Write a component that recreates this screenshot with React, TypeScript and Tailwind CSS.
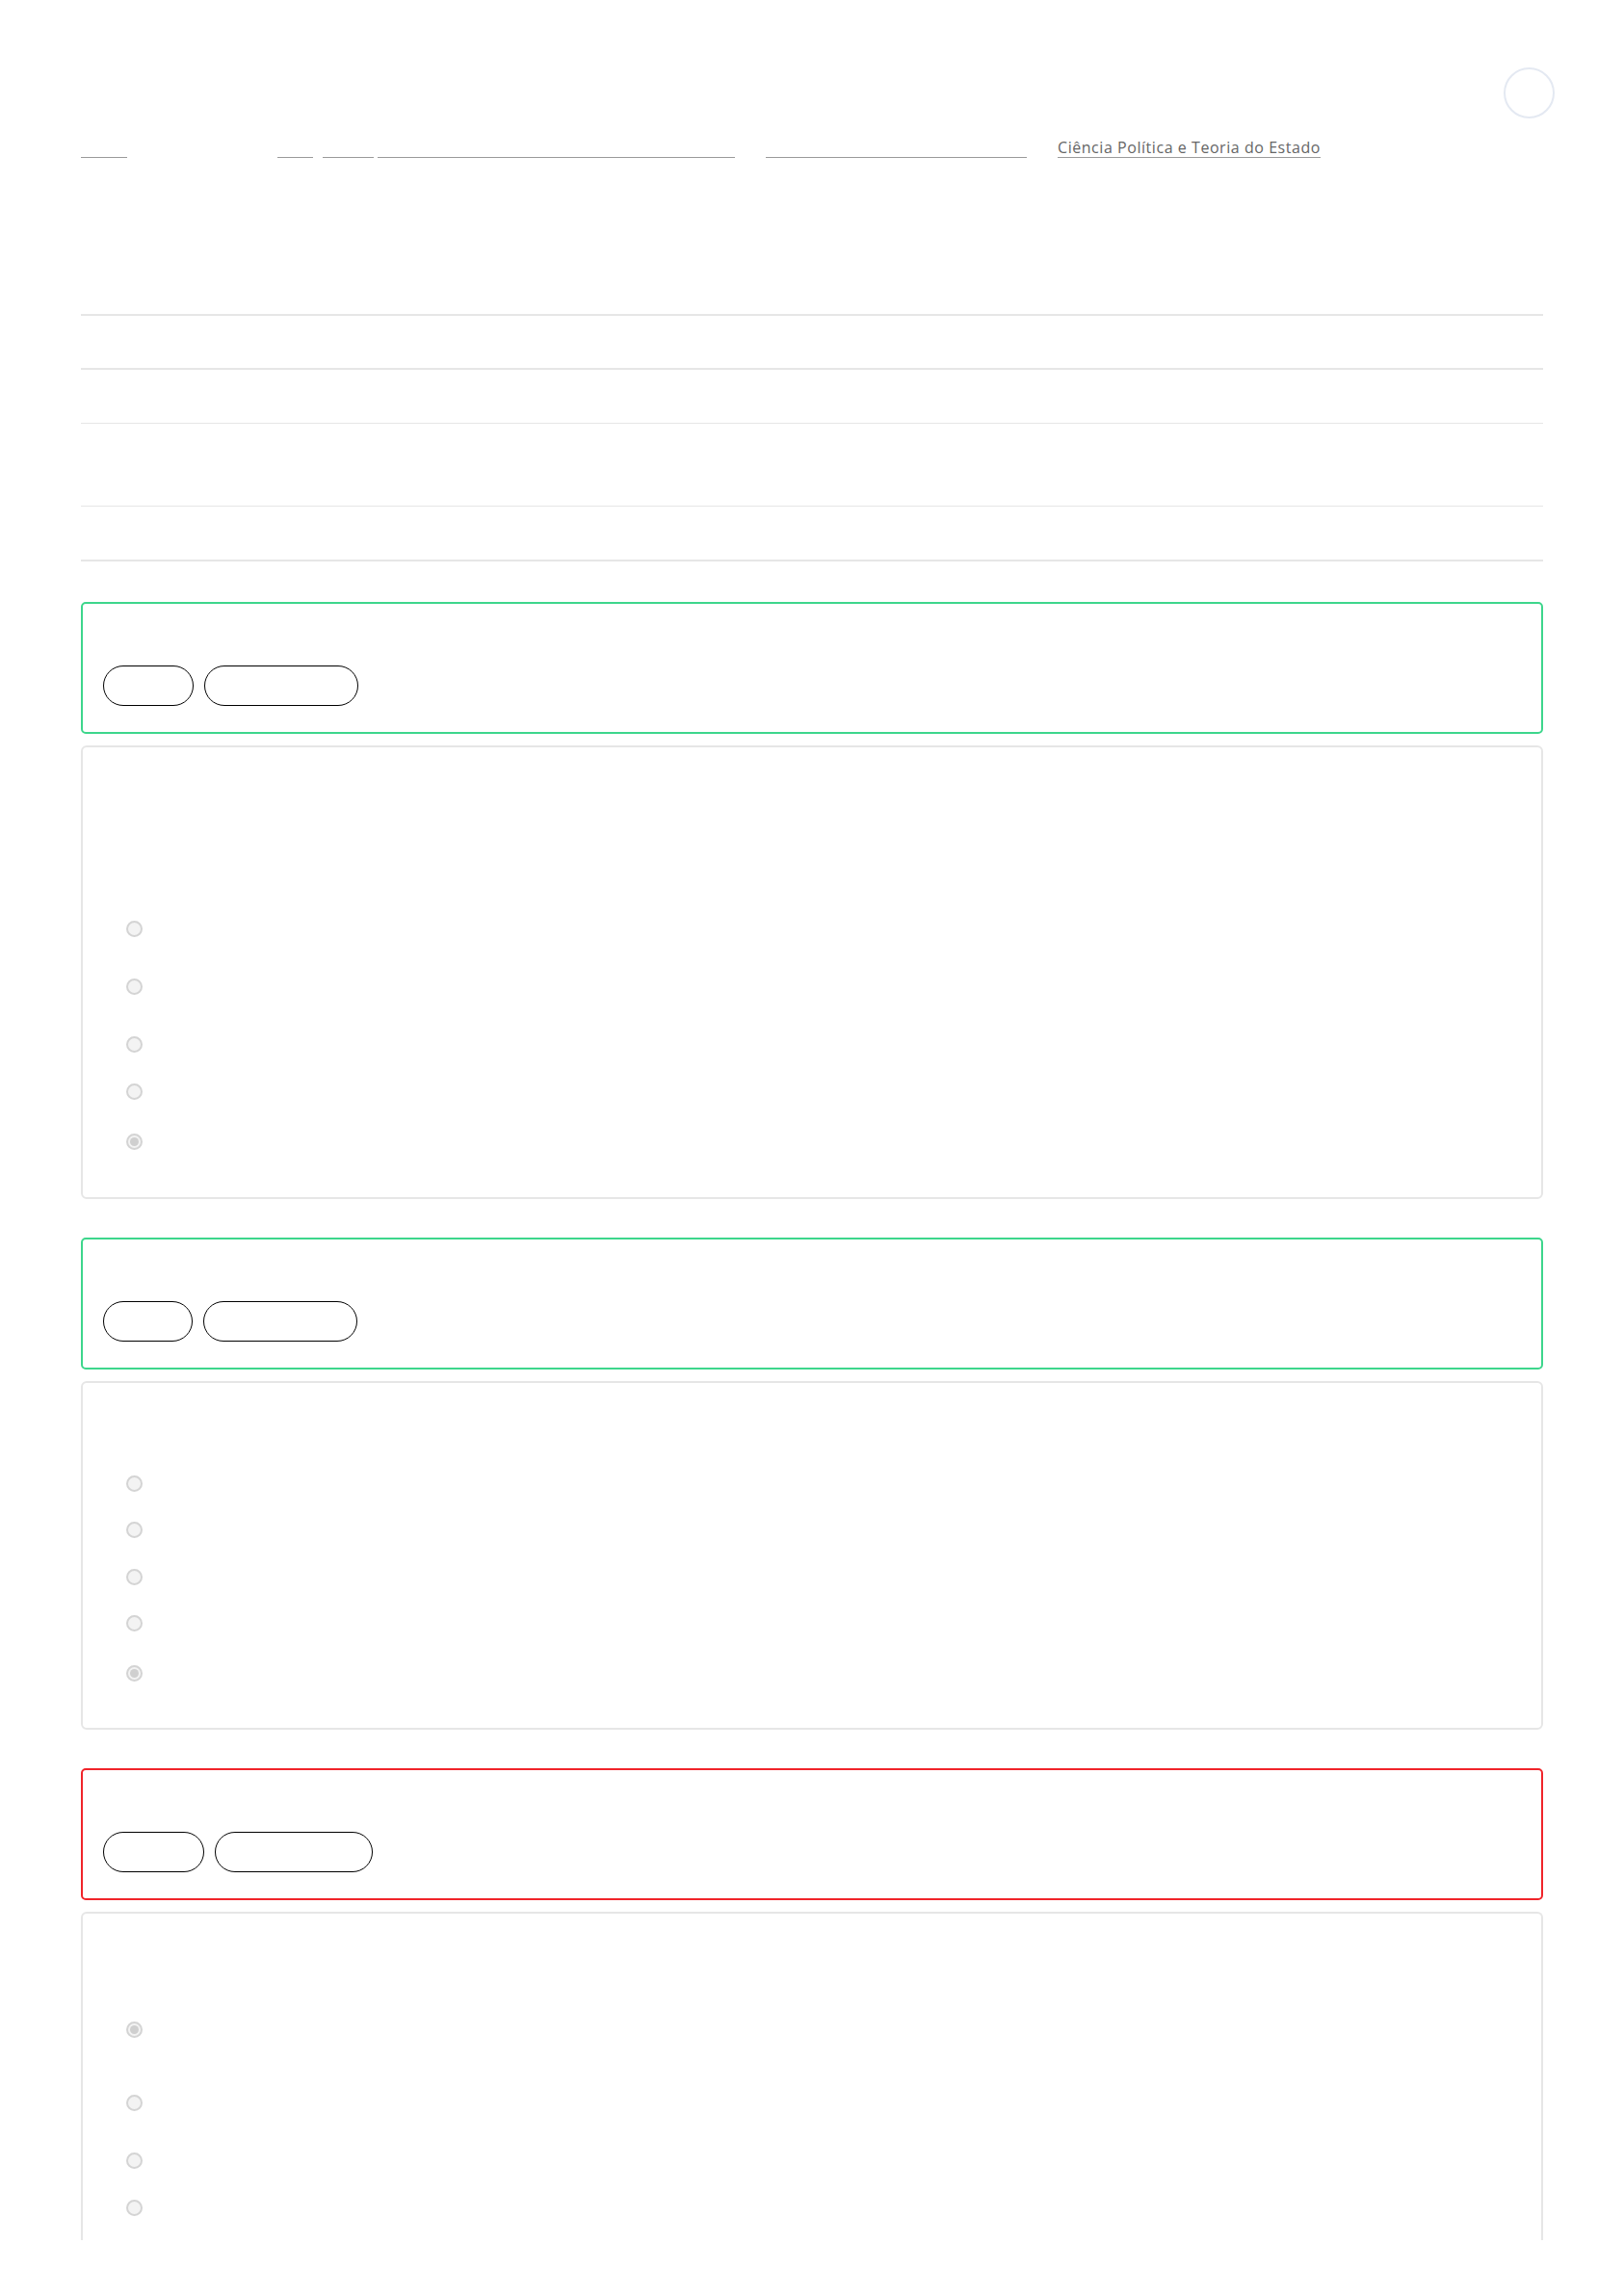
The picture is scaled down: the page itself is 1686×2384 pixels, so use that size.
import React from "react";

function Radio({ checked = false, className = "" }: { checked?: boolean; className?: string }) {
  return (
    <div className={"flex items-center " + className}>
      <span className="flex h-[17px] w-[17px] items-center justify-center rounded-full border-2 border-[#d4d4d4] bg-[#f3f3f3]">
        {checked && <span className="h-[9px] w-[9px] rounded-full bg-[#cfcfcf]" />}
      </span>
    </div>
  );
}

function Pill({ w }: { w: string }) {
  return <div className={"h-[42px] rounded-full border border-black bg-white " + w} />;
}

function ResultBox({ color, pills }: { color: string; pills: string[] }) {
  return (
    <div className={"h-[137px] rounded-[5px] border-2 bg-white px-[21px] pt-[64px] " + color}>
      <div className="flex gap-[11px]">
        {pills.map((p, i) => (
          <Pill key={i} w={p} />
        ))}
      </div>
    </div>
  );
}

export default function App() {
  return (
    <div
      className="min-h-[2384px] bg-white pb-[58px]"
      style={{ fontFamily: '"Open Sans", "Noto Sans", sans-serif' }}
    >
      <div className="mx-auto w-[1518px]">
        {/* top bar */}
        <div className="flex justify-end pt-[70px] -mr-[12px]">
          <div className="h-[53px] w-[53px] rounded-full border-2 border-[#e4e9f2] bg-white" />
        </div>

        {/* breadcrumb */}
        <div className="mt-[21px] flex h-[20px] items-end">
          <div className="h-px w-[48px] bg-[#9a9a9a]" />
          <div className="ml-[156px] h-px w-[37px] bg-[#9a9a9a]" />
          <div className="ml-[10px] h-px w-[53px] bg-[#9a9a9a]" />
          <div className="ml-[4px] h-px w-[371px] bg-[#9a9a9a]" />
          <div className="ml-[32px] h-px w-[271px] bg-[#9a9a9a]" />
          <a
            href="#"
            className="ml-[32px] border-b border-[#9a9a9a] text-[16px] font-medium leading-[19px] tracking-[0.55px] text-[#666666]"
          >
            Ciência Política e Teoria do Estado
          </a>
        </div>

        {/* info table lines */}
        <div className="mt-[162px]">
          <div className="h-[2px] bg-[#e6e6e6]" />
          <div className="h-[54px]" />
          <div className="h-[2px] bg-[#e6e6e6]" />
          <div className="h-[55px]" />
          <div className="h-px bg-[#e6e6e6]" />
          <div className="h-[85px]" />
          <div className="h-px bg-[#e6e6e6]" />
          <div className="h-[55px]" />
          <div className="h-[2px] bg-[#e6e6e6]" />
        </div>

        {/* question 1 */}
        <div className="mt-[42px]">
          <ResultBox color="border-[#3dd68c]" pills={["w-[94px]", "w-[160px]"]} />
          <div className="mt-[12px] rounded-[6px] border-2 border-[#e6e6e6] bg-white pb-[49px] pl-[45px]">
            <Radio className="mt-[180px]" />
            <Radio className="mt-[43px]" />
            <Radio className="mt-[43px]" />
            <Radio className="mt-[32px]" />
            <Radio className="mt-[35px]" checked />
          </div>
        </div>

        {/* question 2 */}
        <div className="mt-[40px]">
          <ResultBox color="border-[#3dd68c]" pills={["w-[93px]", "w-[160px]"]} />
          <div className="mt-[12px] rounded-[6px] border-2 border-[#e6e6e6] bg-white pb-[48px] pl-[45px]">
            <Radio className="mt-[96px]" />
            <Radio className="mt-[31px]" />
            <Radio className="mt-[32px]" />
            <Radio className="mt-[31px]" />
            <Radio className="mt-[35px]" checked />
          </div>
        </div>

        {/* question 3 */}
        <div className="mt-[40px]">
          <ResultBox color="border-[#f0242a]" pills={["w-[105px]", "w-[164px]"]} />
          <div className="mt-[12px] rounded-t-[6px] border-2 border-b-0 border-[#e6e6e6] bg-white pb-[25px] pl-[45px]">
            <Radio className="mt-[112px]" checked />
            <Radio className="mt-[59px]" />
            <Radio className="mt-[43px]" />
            <Radio className="mt-[32px]" />
          </div>
        </div>
      </div>
    </div>
  );
}
